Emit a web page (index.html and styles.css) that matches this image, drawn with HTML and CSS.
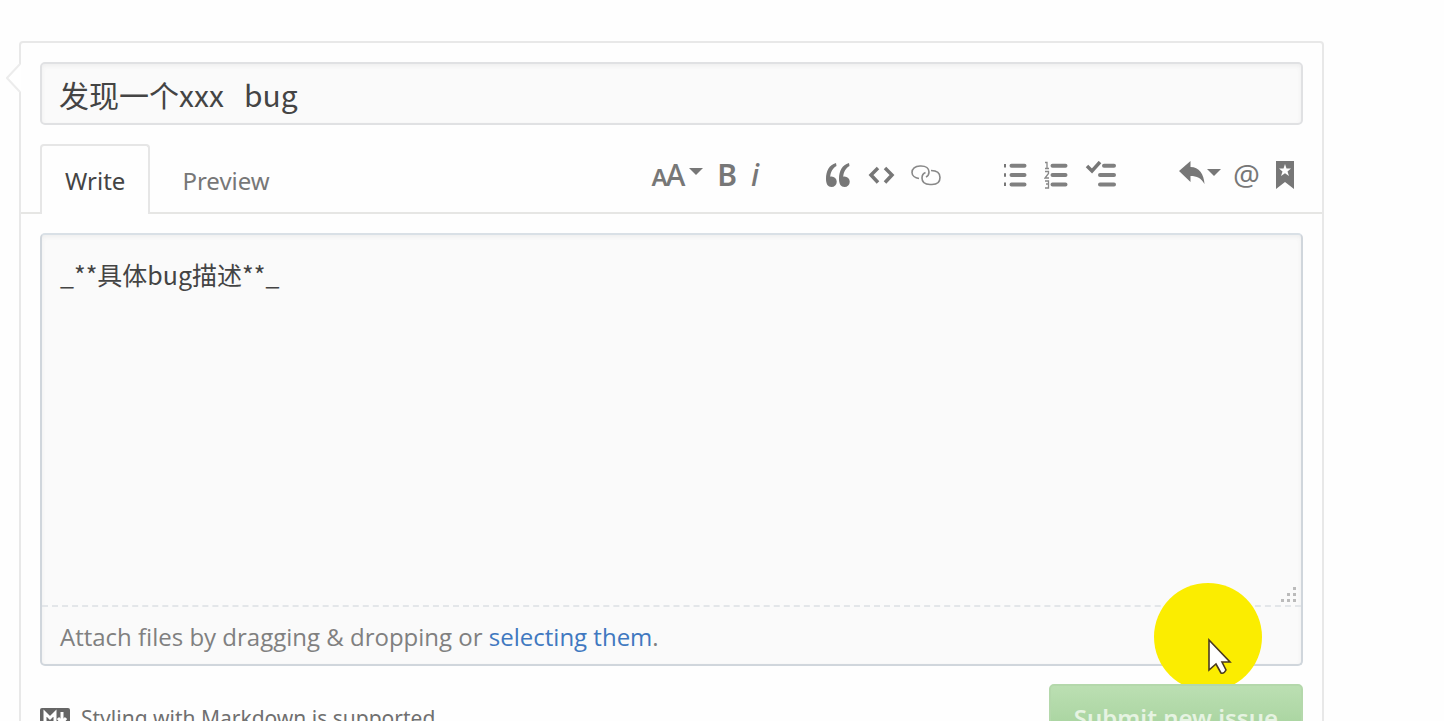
FILE: index.html
```html
<!DOCTYPE html>
<html lang="zh-CN">
<head>
<meta charset="utf-8">
<title>New issue</title>
<link rel="stylesheet" href="styles.css">
</head>
<body>
<form class="composer">
  <svg class="notch" viewBox="0 0 15 30" aria-hidden="true"><path d="M15 1 1 15l14 14z" fill="#fff"/><path d="M14 1 1 15l13 14" fill="none" stroke="#ececec" stroke-width="2"/></svg>
  <div class="title-row">
    <input class="field title" type="text" aria-label="Title" value="发现一个xxx   bug">
  </div>
  <div class="head">
    <div class="tabs" role="tablist">
      <button class="tab tab-active" type="button" role="tab" aria-selected="true">Write</button>
      <button class="tab" type="button" role="tab" aria-selected="false">Preview</button>
    </div>
    <div class="toolbar">
      <div class="group group-text">
        <button class="tool size" type="button" aria-label="Text size"><span class="small-a">A</span><span class="big-a">A</span><svg class="caret" viewBox="0 0 14 7"><path d="M0 0h14L7 7z"/></svg></button>
        <button class="tool bold" type="button" aria-label="Bold">B</button>
        <button class="tool italic" type="button" aria-label="Italic">i</button>
      </div>
      <div class="group">
        <button class="tool" type="button" aria-label="Quote"><svg width="26" height="28" viewBox="0 0 26 28"><path d="M11 2C4 4 1 10 1 18c0 5 2 8 5.500 8a5 5 0 0 0 0-10.500c-.6 0-1 0-1.300.2C5.500 11 8 7 11.500 5zM24 2c-7 2-10 8-10 16 0 5 2 8 5.500 8a5 5 0 0 0 0-10.500c-.6 0-1 0-1.300.2.3-4.700 2.800-8.700 6.300-10.700z"/></svg></button>
        <button class="tool" type="button" aria-label="Code"><svg width="28" height="28" viewBox="0 0 28 28"><path d="m11 7-7 7 7 7.500M18 7l7 7-7 7.500" fill="none" stroke="#777" stroke-width="3.500"/></svg></button>
        <button class="tool" type="button" aria-label="Link"><svg width="30" height="28" viewBox="0 0 30 28"><g fill="none" stroke="#888" stroke-width="1.600"><path d="M8 17.500C4 17 1 14.500 1 11.500 1 8 4 5 9 5h1c5 0 8 2.500 8 6 0 2.500-1 4-3 5"/><path d="M20 9.500c6 0 9 3 9 7 0 4.500-3 7-8 7h-2c-5 0-8-2.500-8-6.500 0-3 1-4.500 3.500-5.500"/></g></svg></button>
      </div>
      <div class="group group-lists">
        <button class="tool" type="button" aria-label="Bulleted list"><svg width="24" height="28" viewBox="0 0 24 28"><path d="M1 3h2v3.500H1zm0 9.300h2v3.500H1zm0 9.300h2v3.500H1z"/><path d="M8.500 4.700h13M8.500 14h13M8.500 23.500h13" class="bar"/></svg></button>
        <button class="tool" type="button" aria-label="Numbered list"><svg width="24" height="28" viewBox="0 0 24 28"><path d="M1 1.500h2V7M1 7.500h4M1 10.500h3.500v2L1 17h4M1 20h3.500v3H2M4.500 23v4H1" fill="none" stroke="#888" stroke-width="1.300"/><path d="M8.500 4.700h13M8.500 14h13M8.500 23.500h13" class="bar"/></svg></button>
        <button class="tool" type="button" aria-label="Task list"><svg width="32" height="28" viewBox="0 0 32 28"><path d="m2 5 5 5 8-9" fill="none" stroke="#777" stroke-width="3.500"/><path d="M19 4.700h10M15 14h14M15 23.500h14" class="bar"/></svg></button>
      </div>
      <div class="group group-actions">
        <button class="tool" type="button" aria-label="Reply"><svg width="42" height="28" viewBox="0 0 42 28"><path d="M0 10 11.500 0v6C20 6 25 13 25.500 23 22 17 18 15 11.500 15v6z"/><path d="M28 8h14l-7 7z"/></svg></button>
        <button class="tool mention" type="button" aria-label="Mention">@</button>
        <button class="tool" type="button" aria-label="Saved replies"><svg width="18" height="28" viewBox="0 0 18 28"><path fill-rule="evenodd" d="M0 0h18v28l-9-7-9 7zM9 3 7.500 7.500H3l3.500 3L5 15l4-2.700 4 2.700-1.500-4.500 3.500-3h-4.500z"/></svg></button>
      </div>
    </div>
  </div>
  <div class="body">
    <div class="field editor">
      <textarea class="text" aria-label="Description">_**具体bug描述**_</textarea>
      <svg class="grip" viewBox="0 0 15 15" aria-hidden="true"><path d="M12 0h3v3h-3zM6 6h3v3H6zm6 0h3v3h-3zM0 12h3v3H0zm6 0h3v3H6zm6 0h3v3h-3z"/></svg>
      <p class="attach">Attach files by dragging &amp; dropping or <a class="link" href="#files">selecting them</a>.</p>
    </div>
    <div class="foot">
      <a class="markdown" href="#markdown"><svg width="30" height="20" viewBox="0 0 30 20" aria-hidden="true"><rect width="30" height="20" rx="2" fill="#666"/><path d="M5 16V5l5 5 5-5v11M22 4v10M18 10l4 5 4-5" fill="none" stroke="#fff" stroke-width="3"/></svg><span>Styling with Markdown is supported</span></a>
      <button class="submit" type="submit">Submit new issue</button>
    </div>
  </div>
  <svg class="pointer" viewBox="0 0 110 110" aria-hidden="true"><circle cx="55" cy="54" r="54" fill="#fbed00"/><path d="M56 57v30l7-6 5 9q3 1 5-3l-4-8h8z" fill="#fff" stroke="#4a3a20" stroke-width="1.600"/></svg>
</form>
</body>
</html>
```
FILE: styles.css
```css
* { box-sizing: border-box; }
body {
  margin: 0;
  padding: 41px 120px 0 19px;
  height: 100vh;
  overflow: hidden;
  background: #fefefe;
  color: #444;
  font: 24px/32px "Noto Sans", "Noto Sans CJK SC", sans-serif;
}
button, input, textarea { font: inherit; color: inherit; }
.composer {
  position: relative;
  border: 2px solid #e8e8e8;
  border-radius: 4px;
  background: #fefefe;
}
.notch {
  position: absolute;
  left: -15px;
  top: 20px;
  width: 15px;
  height: 30px;
}
.title-row { padding: 19px 19px 0; }
.field {
  width: 100%;
  border: 2px solid #e0e1e3;
  border-radius: 5px;
  background: #fafafa;
  box-shadow: inset 0 2px 4px #eeeeee;
}
.title {
  display: block;
  height: 63px;
  padding: 0 17px;
  font-family: "Noto Sans CJK SC", sans-serif;
  font-size: 30px;
}
.head {
  display: flex;
  justify-content: space-between;
  margin-top: 19px;
  padding: 0 28px 0 19px;
  border-bottom: 2px solid #e6e6e4;
}
.tabs { display: flex; margin-bottom: -2px; }
.tab {
  height: 70px;
  padding: 4px 32px 0;
  border: 0;
  background: none;
  color: #777;
}
.tab-active {
  padding: 2px 23px 0;
  border: 2px solid #e6e6e6;
  border-bottom: 0;
  border-radius: 4px 4px 0 0;
  background: #fefefe;
  color: #444;
}
.toolbar { display: flex; gap: 62px; height: 62px; align-items: center; }
.group { display: flex; align-items: center; gap: 16px; }
.group-text { gap: 14px; }
.group-lists { gap: 17px; }
.group-actions { gap: 12px; }
.tool {
  display: flex;
  align-items: center;
  height: 32px;
  padding: 0;
  border: 0;
  background: none;
  color: #777;
  fill: #777;
}
.bar { fill: none; stroke: #808080; stroke-width: 4; stroke-linecap: round; }
.size { align-items: baseline; font-weight: 500; }
.small-a { font-size: 24px; margin-right: -2px; font-weight: 600; }
.big-a { font-size: 30px; }
.caret { width: 14px; height: 7px; align-self: center; margin: 0 0 8px 4px; }
.bold { font-size: 30px; font-weight: 600; }
.italic { width: 12px; font-size: 30px; font-style: italic; font-weight: 500; }
.mention { font-family: "Open Sans", sans-serif; font-size: 30px; font-weight: 400; margin-right: 4px; }
.body { padding: 19px 19px 0; }
.editor {
  position: relative;
  border-color: #d0d6dc;
  border-top-color: #d9e0e6;
}
.text {
  display: block;
  width: 100%;
  height: 372px;
  padding: 22px 18px;
  border: 0;
  border-bottom: 2px dashed #e3e6e9;
  background: none;
  resize: none;
  font-family: "Noto Sans CJK SC", sans-serif;
  font-size: 25px;
  line-height: 34px;
}
.grip { position: absolute; right: 5px; bottom: 62px; width: 15px; height: 15px; fill: #bbb; }
.attach { margin: 0; padding: 14px 18px 11px; color: #808080; font-family: "Open Sans", sans-serif; }
.link { color: #4078c0; text-decoration: none; }
.foot { display: flex; justify-content: space-between; padding: 18px 0 20px; }
.markdown {
  display: flex;
  align-items: center;
  gap: 11px;
  color: #707070;
  font-size: 21px;
  text-decoration: none;
}
.submit {
  position: relative;
  z-index: 1;
  height: 68px;
  padding: 0 23px;
  border: 2px solid #b4d8ab;
  border-radius: 5px;
  background: linear-gradient(#bbdfb2, #9fce96);
  color: #e6f3e2;
  font-weight: 600;
}
.pointer { position: absolute; right: 59px; top: 540px; width: 110px; height: 110px; }
```
